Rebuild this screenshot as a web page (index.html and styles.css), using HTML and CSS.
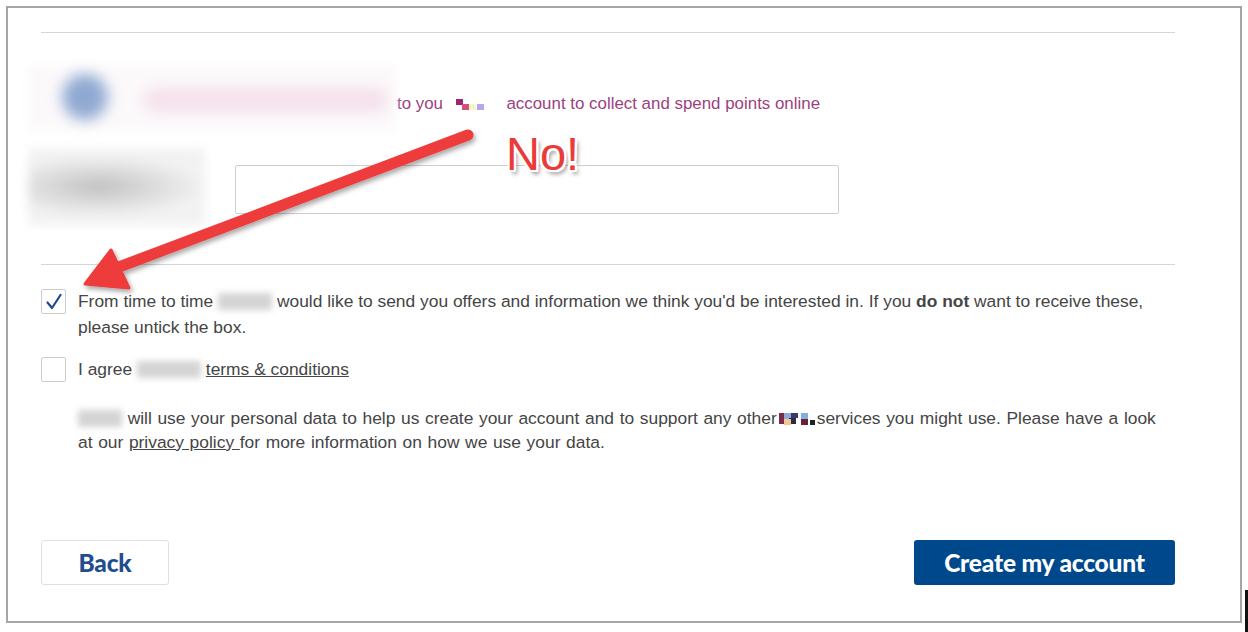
FILE: index.html
```html
<!DOCTYPE html>
<html lang="en">
<head>
    <meta charset="UTF-8">
    <meta name="viewport" content="width=device-width, initial-scale=1.0">
    <title>Create account</title>
    <link rel="stylesheet" href="styles.css">
</head>
<body>
    <div class="frame">
        <hr class="rule">

        <div class="points-row">
            <div class="redact-logo">
                <span class="blur-dot"></span>
                <span class="blur-band"></span>
            </div>
            <p class="points-text">to you
                <span class="pix pix-a">
                    <i style="background:#a3246e;left:0;top:0"></i>
                    <i style="background:#d4507a;left:6px;top:5px"></i>
                    <i style="background:#f6f4c8;left:13px;top:5px"></i>
                    <i style="background:#b9a6e8;left:21px;top:5px"></i>
                </span>
                account to collect and spend points online</p>
        </div>

        <div class="field-row">
            <div class="redact-label"></div>
            <input class="field" type="text">
        </div>

        <hr class="rule rule-2">

        <div class="check-row">
            <span class="box checked">
                <svg width="18" height="18" viewBox="0 0 18 18"><path d="M2.5 9.5 L7 15 L15.5 2" fill="none" stroke="#1d4b8f" stroke-width="2.2" stroke-linecap="round" stroke-linejoin="round"/></svg>
            </span>
            <p>From time to time <span class="redact w58"></span> would like to send you offers and information we think you'd be interested in. If you <b>do not</b> want to receive these, please untick the box.</p>
        </div>

        <div class="check-row row-2">
            <span class="box"></span>
            <p>I agree <span class="redact w60"></span> <a href="#">terms &amp; conditions</a></p>
        </div>

        <p class="privacy"><span class="redact w44"></span> will use your personal data to help us create your account and to support any other<span class="pix pix-b">
                <i style="background:#7b2a4a;left:0;top:0;height:11px"></i>
                <i style="background:#8ea8d8;left:5px;top:0"></i>
                <i style="background:#2b2b4a;left:10px;top:5px"></i>
                <i style="background:#f0c896;left:5px;top:6px"></i>
                <i style="background:#3a3a66;left:12px;top:0;height:5px"></i>
                <i style="background:#7fb0e0;left:22px;top:0;height:6px"></i>
                <i style="background:#6a2038;left:22px;top:6px;height:6px"></i>
                <i style="background:#222;left:31px;top:7px;width:5px;height:5px"></i>
            </span>services you might use. Please have a look at our <a href="#">privacy policy </a>for more information on how we use your data.</p>

        <div class="actions">
            <button class="btn btn-back">Back</button>
            <button class="btn btn-create">Create my account</button>
        </div>

        <div class="callout">No!</div>
        <svg class="arrow" width="480" height="200" viewBox="0 0 480 200">
            <defs>
                <filter id="shade" x="-10%" y="-10%" width="130%" height="140%">
                    <feDropShadow dx="2" dy="3" stdDeviation="2.5" flood-color="#000" flood-opacity="0.35"/>
                </filter>
            </defs>
            <g filter="url(#shade)" fill="#ee3b3b" stroke="#ee3b3b">
                <line x1="461" y1="9" x2="112" y2="141" stroke-width="11" stroke-linecap="round"/>
                <polygon points="78,158 104,124 122,162" stroke-width="3" stroke-linejoin="round"/>
            </g>
        </svg>
    </div>
    <div class="edge-mark"></div>
</body>
</html>
```

FILE: styles.css
```css
body {
    margin: 0;
    background: #fff;
    font-family: "Liberation Sans", Arial, sans-serif;
    font-size: 17.4px;
    color: #454545;
    overflow: hidden;
}
.frame {
    position: relative;
    box-sizing: border-box;
    margin: 6px 6px 0 6px;
    height: 617px;
    border: 2px solid #a6a6a6;
    padding: 24px 65px 0 33px;
}
.rule {
    margin: 0;
    border: 0;
    border-top: 1px solid #d6d6d6;
}
.rule-2 {
    margin-top: 39px;
}
.points-row {
    display: flex;
    align-items: center;
    margin-top: 33px;
    height: 64px;
}
.redact-logo {
    position: relative;
    margin-left: -13px;
    width: 367px;
    height: 64px;
    background: #fcf9fb;
    filter: blur(4px);
}
.blur-dot {
    position: absolute;
    left: 34px;
    top: 8px;
    width: 46px;
    height: 46px;
    border-radius: 50%;
    background: #8fa9d2;
    filter: blur(6px);
}
.blur-band {
    position: absolute;
    left: 115px;
    top: 22px;
    width: 245px;
    height: 24px;
    border-radius: 12px;
    background: #f4e0eb;
    filter: blur(6px);
}
.points-text {
    margin: 12px 0 0 2px;
    color: #9d3f80;
    font-size: 16.9px;
}
.pix {
    position: relative;
    display: inline-block;
    vertical-align: -1px;
}
.pix i {
    position: absolute;
    width: 7px;
    height: 6px;
}
.pix-a {
    width: 40px;
    height: 11px;
    margin: 0 6px 0 8px;
}
.pix-b {
    width: 38px;
    height: 12px;
    margin: 0 0 0 2px;
}
.field-row {
    display: flex;
    margin-top: 18px;
    height: 77px;
}
.redact-label {
    margin-left: -13px;
    width: 177px;
    height: 77px;
    background: radial-gradient(ellipse 60% 40% at 40% 50%, #c2c2c2, #e4e4e4 70%, #f2f2f2);
    filter: blur(5px);
}
.field {
    margin: 17px 0 0 30px;
    width: 604px;
    height: 49px;
    box-sizing: border-box;
    border: 1px solid #cfcfcf;
    border-radius: 2px;
}
.check-row {
    display: flex;
    align-items: flex-start;
    margin-top: 23px;
}
.row-2 {
    margin-top: 16px;
}
.check-row p {
    margin: 0 0 0 12px;
    line-height: 26px;
    flex: 1;
}
.box {
    flex: none;
    display: flex;
    align-items: center;
    justify-content: center;
    box-sizing: border-box;
    margin-top: 1px;
    width: 25px;
    height: 25px;
    border: 1px solid #cdcdcd;
    border-radius: 2px;
    background: #fff;
}
.redact {
    display: inline-block;
    height: 17px;
    vertical-align: -3px;
    background: #d4d4d4;
    filter: blur(3px);
}
.w58 { width: 54px; }
.w60 { width: 64px; }
.w44 { width: 44px; }
a {
    color: #454545;
    text-decoration: underline;
}
.privacy {
    margin: 24px 0 0 37px;
    padding-right: 12px;
    line-height: 24px;
    word-spacing: 0.8px;
}
.actions {
    display: flex;
    justify-content: space-between;
    margin-top: 86px;
}
.btn {
    height: 45px;
    border-radius: 3px;
    font-family: Lato, "DejaVu Sans", sans-serif;
    font-weight: 900;
    font-size: 24.5px;
    letter-spacing: -0.2px;
    cursor: pointer;
}
.btn-back {
    width: 128px;
    background: #fff;
    color: #1f4d8e;
    border: 1px solid #d9e1ea;
}
.btn-create {
    width: 261px;
    background: #00488c;
    color: #fff;
    border: 0;
}
.callout {
    position: absolute;
    left: 498px;
    top: 118px;
    font-family: "Liberation Sans", Arial, sans-serif;
    font-size: 47px;
    color: #ea3a3a;
    text-shadow:
        -2px 0 #fff, 2px 0 #fff, 0 -2px #fff, 0 2px #fff,
        -2px -2px #fff, 2px 2px #fff, -2px 2px #fff, 2px -2px #fff,
        3px 4px 4px rgba(0, 0, 0, 0.45);
}
.arrow {
    position: absolute;
    left: -1px;
    top: 118px;
}
.edge-mark {
    position: absolute;
    left: 1245px;
    top: 590px;
    width: 3px;
    height: 42px;
    background: #111;
}
```
